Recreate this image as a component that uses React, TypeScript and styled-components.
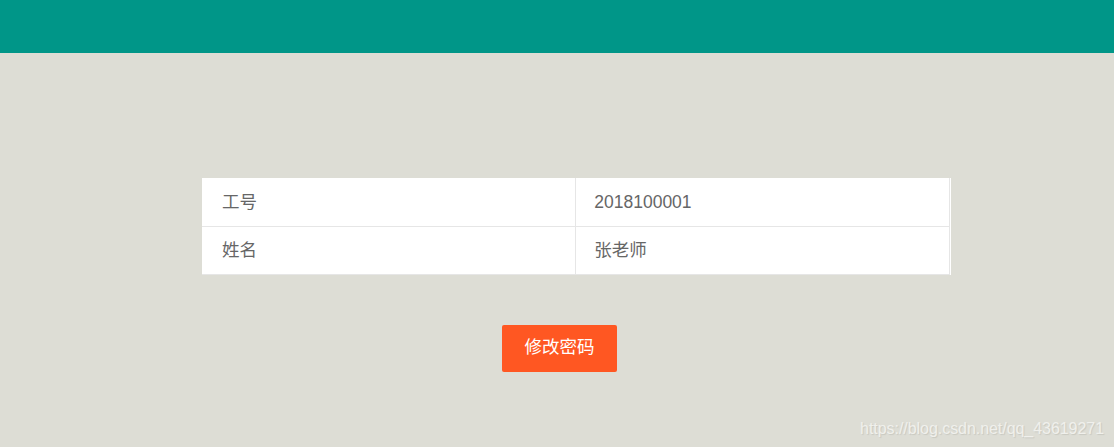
import React from "react";
import styled, { createGlobalStyle } from "styled-components";

const Global = createGlobalStyle`
  html, body { margin: 0; padding: 0; }
  body {
    background: #ddddd5;
    font-family: "Liberation Sans", "Noto Sans CJK SC", sans-serif;
    width: 1114px;
    height: 447px;
    overflow: hidden;
  }
`;

const Page = styled.div`
  position: relative;
  width: 1114px;
  height: 447px;
  background: #ddddd5;
`;

const Header = styled.div`
  height: 53px;
  background: #009688;
`;

const Main = styled.div`
  display: flex;
  flex-direction: column;
  padding-top: 125px;
`;

const TableBox = styled.div`
  margin-left: 202px;
  width: 749px;
  background: #fff;
  box-sizing: border-box;
  padding-right: 1px;
`;

const Table = styled.table`
  width: 748px;
  border-collapse: collapse;
  table-layout: fixed;
`;

const Row = styled.tr`
  height: 48px;
`;

const Cell = styled.td<{ $value?: boolean }>`
  box-sizing: border-box;
  padding: 0 20px 0 ${(p) => (p.$value ? "18px" : "20px")};
  border-right: 1px solid #e6e6e6;
  border-bottom: 1px solid #e6e6e6;
  font-size: 17.5px;
  line-height: 24px;
  color: #666;
  vertical-align: middle;
`;

const ButtonRow = styled.div`
  display: flex;
  justify-content: center;
  padding-top: 50px;
  padding-left: 5px;
`;

const Button = styled.button`
  width: 115px;
  height: 47px;
  border: none;
  border-radius: 2px;
  background: #ff5722;
  color: #fff;
  font-family: "Liberation Sans", "Noto Sans CJK SC", sans-serif;
  font-size: 17.5px;
  line-height: 24px;
  padding: 0 0 2px;
  cursor: pointer;
`;

const Watermark = styled.div`
  position: absolute;
  right: 10px;
  bottom: 9px;
  font-family: "Liberation Sans", sans-serif;
  font-size: 16px;
  letter-spacing: -0.05px;
  color: #f0f0ec;
  text-shadow: 1px 1px 1px #c8c8c0;
`;

export default function App() {
  return (
    <Page>
      <Global />
      <Header />
      <Main>
        <TableBox>
          <Table>
            <tbody>
              <Row>
                <Cell>工号</Cell>
                <Cell $value>2018100001</Cell>
              </Row>
              <Row>
                <Cell>姓名</Cell>
                <Cell $value>张老师</Cell>
              </Row>
            </tbody>
          </Table>
        </TableBox>
        <ButtonRow>
          <Button>修改密码</Button>
        </ButtonRow>
      </Main>
      <Watermark>https://blog.csdn.net/qq_43619271</Watermark>
    </Page>
  );
}
